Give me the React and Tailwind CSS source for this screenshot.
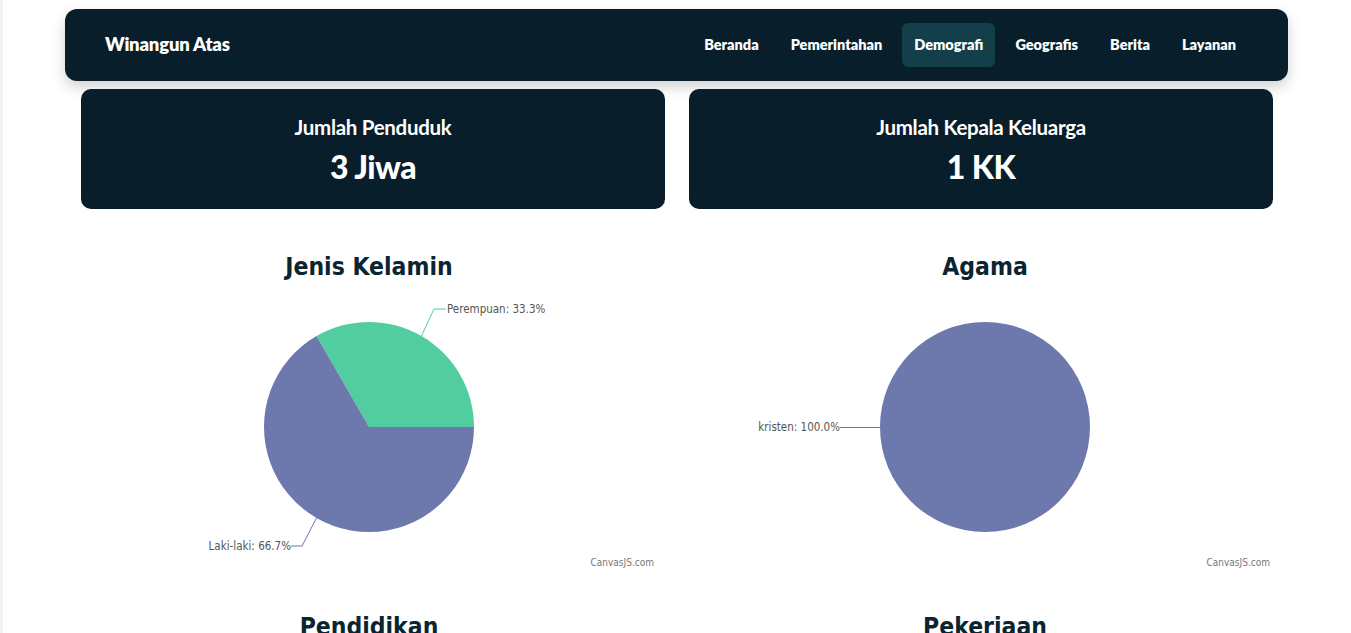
import React from 'react'

const navItems = ['Beranda', 'Pemerintahan', 'Demografi', 'Geografis', 'Berita', 'Layanan']

const BLUE = '#6d78ad'
const GREEN = '#51cda0'

function Credit() {
  return (
    <text x="573" y="276" textAnchor="end" fontSize="10" fill="#777" fontFamily="'DejaVu Sans Condensed', 'DejaVu Sans', sans-serif">
      CanvasJS.com
    </text>
  )
}

function GenderPie() {
  // center 288,137 r105 ; green slice 0..120deg
  return (
    <svg width="576" height="282" className="block">
      <path d="M288,137 L393,137 A105,105 0 0,0 235.5,46.07 Z" fill={GREEN} />
      <path d="M288,137 L235.5,46.07 A105,105 0 1,0 393,137 Z" fill={BLUE} />
      <polyline points="340,47 353,19 365,19" fill="none" stroke={GREEN} strokeWidth="1" />
      <polyline points="235.5,228 221,256 210,256" fill="none" stroke={BLUE} strokeWidth="1" />
      <g fontFamily="'DejaVu Sans Condensed', 'DejaVu Sans', sans-serif" fontSize="11.5" fill="#555">
        <text x="366" y="23">Perempuan: 33.3%</text>
        <text x="210" y="260" textAnchor="end">Laki-laki: 66.7%</text>
      </g>
      <Credit />
    </svg>
  )
}

function ReligionPie() {
  return (
    <svg width="576" height="282" className="block">
      <circle cx="288" cy="137" r="105" fill={BLUE} />
      <line x1="143" y1="137.5" x2="183" y2="137.5" stroke={BLUE} strokeWidth="1" />
      <text x="143" y="141" textAnchor="end" fontFamily="'DejaVu Sans Condensed', 'DejaVu Sans', sans-serif" fontSize="11.5" fill="#555">
        kristen: 100.0%
      </text>
      <Credit />
    </svg>
  )
}

function ChartBlock({ title, children }) {
  return (
    <div className="w-[576px] flex flex-col items-center">
      <h2 className="h-[44px] pt-[5px] text-[24.5px] leading-[32px] font-bold text-[#0b2530] font-['DejaVu_Sans_Condensed','DejaVu_Sans',sans-serif]">{title}</h2>
      {children}
    </div>
  )
}

export default function App() {
  return (
    <div className="min-h-screen bg-white font-['Lato',sans-serif] border-l-[3px] border-[#f3f3f3]">
      <div className="w-[1223px] ml-[62px] pt-[9px]">
        <nav className="h-[72px] bg-[#081f2b] rounded-[12px] px-10 flex items-center justify-between shadow-[0_6px_14px_rgba(0,0,0,0.18)]">
          <div className="text-white font-extrabold text-[18.5px] tracking-[-0.2px]">Winangun Atas</div>
          <ul className="flex items-center gap-2">
            {navItems.map(n => (
              <li key={n} className={(n === 'Demografi' ? 'bg-[#133f4b] ' : '') + 'h-[44px] px-3 flex items-center rounded-[6px] text-white font-extrabold text-[14.5px] tracking-[0px]'}>
                {n}
              </li>
            ))}
          </ul>
        </nav>
      </div>

      <div className="ml-[78px] mt-[8px] flex gap-6">
        {[['Jumlah Penduduk', '3 Jiwa'], ['Jumlah Kepala Keluarga', '1 KK']].map(([l, v]) => (
          <div key={l} className="w-[584px] h-[120px] bg-[#081f2b] rounded-[10px] flex flex-col items-center pt-[26px] text-white">
            <div className="text-[20.5px] font-bold leading-[24px] tracking-[-0.3px]">{l}</div>
            <div className="mt-[10px] text-[32px] font-black leading-[36px] tracking-[-0.5px]">{v}</div>
          </div>
        ))}
      </div>

      <div className="ml-[78px] mt-[37px] flex gap-10">
        <ChartBlock title="Jenis Kelamin"><GenderPie /></ChartBlock>
        <ChartBlock title="Agama"><ReligionPie /></ChartBlock>
      </div>

      <div className="ml-[78px] mt-[34px] flex gap-10">
        <ChartBlock title="Pendidikan" />
        <ChartBlock title="Pekerjaan" />
      </div>
    </div>
  )
}
